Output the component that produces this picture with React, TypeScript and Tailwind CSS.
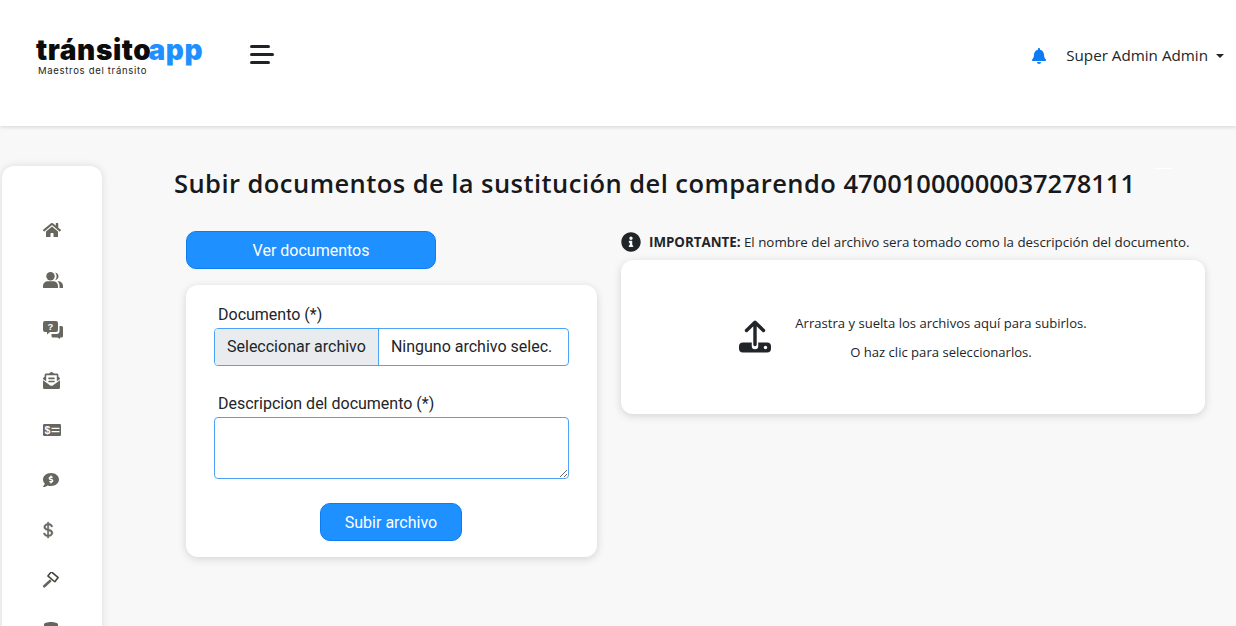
import { FaHome, FaEnvelopeOpenText, FaCommentDollar, FaDatabase, FaBell, FaInfoCircle } from "react-icons/fa";
import { BsCurrencyDollar } from "react-icons/bs";

function Users() {
  return (
    <svg width="20" height="16" viewBox="0 0 20 16" fill="currentColor">
      <circle cx="7.500" cy="4.200" r="4.200" />
      <path d="M0 16v-1.800C0 11 2.400 9.300 4.700 9.300h5.600c2.300 0 4.700 1.700 4.700 4.900V16z" />
      <path d="M12 .4c2 .3 3.500 2 3.500 3.900S14 8 12 8.300c1-1 1.600-2.500 1.600-4S13 1.400 12 .4z" />
      <path d="M14.500 9.300h.8c2.400 0 4.700 1.800 4.700 4.700v2h-3.500v-2c0-1.900-.7-3.500-2-4.700z" />
    </svg>
  );
}

function QuestionComments() {
  return (
    <svg width="20" height="18" viewBox="0 0 20 18" fill="currentColor">
      <path d="M2 0h11a2 2 0 0 1 2 2v7a2 2 0 0 1-2 2H7l-3 2.500V11H2a2 2 0 0 1-2-2V2a2 2 0 0 1 2-2z" />
      <text x="7.500" y="9" textAnchor="middle" fontSize="9.500" fontWeight="700" fill="#fff" fontFamily="Liberation Sans, sans-serif">?</text>
      <path d="M16.500 5h2A1.500 1.500 0 0 1 20 6.500V15a1.500 1.500 0 0 1-1.500 1.500H17V18l-2.500-1.500H10A1.500 1.500 0 0 1 8.500 15v-2H13.500a3 3 0 0 0 3-3z" />
    </svg>
  );
}

function MoneyCheck() {
  return (
    <svg width="18" height="12" viewBox="0 0 18 12" fill="currentColor">
      <rect width="18" height="12" rx="1.200" />
      <text x="4.500" y="9.800" textAnchor="middle" fontSize="10.500" fontWeight="700" fill="#fff" fontFamily="Liberation Sans, sans-serif">$</text>
      <path d="M8.500 4.300h8M8.500 7.700h8" stroke="#fff" strokeWidth="1.200" fill="none" />
    </svg>
  );
}

function Gavel() {
  return (
    <svg width="16" height="16" viewBox="0 0 16 16">
      <rect x="5.500" y="2" width="9" height="5.500" rx=".4" transform="rotate(40 10 4.800)" fill="#fff" stroke="#45453f" strokeWidth="1.600" />
      <path d="M7 9 1.300 14.300" stroke="#66665e" strokeWidth="2.600" strokeLinecap="round" fill="none" />
    </svg>
  );
}

function Hamburger() {
  return (
    <svg width="24" height="20" viewBox="0 0 24 20" fill="#1f2328">
      <rect x="0" y="0" width="20" height="3" rx="1.500" />
      <rect x="0" y="8" width="24" height="3" rx="1.500" />
      <rect x="0" y="16" width="20" height="3" rx="1.500" />
    </svg>
  );
}

function UploadIcon() {
  return (
    <svg width="32" height="33" viewBox="0 0 32 33" fill="#212529">
      <rect x="0" y="22.500" width="32" height="10" rx="4" />
      <circle cx="26.500" cy="27.500" r="1.700" fill="#fff" />
      <path d="M16 26V8" fill="none" stroke="#fff" strokeWidth="6.500" strokeLinecap="round" />
      <path d="M16 24.500V3M7.500 10.500 16 2.200 24.500 10.500" fill="none" stroke="#212529" strokeWidth="3.400" strokeLinecap="round" strokeLinejoin="round" />
    </svg>
  );
}

function Logo() {
  return (
    <div className="flex flex-col w-[170px] mt-[4px]">
      <div className="text-[28px] leading-[28px] font-black tracking-[0.6px] font-['Inter',sans-serif] text-[#0c0c0c] whitespace-nowrap">
        tránsito<span className="text-[#1e90ff] -ml-[3px]">app</span>
      </div>
      <div className="text-[9.500px] leading-[10px] font-normal tracking-[0.7px] ml-[2px] mt-[2px] font-['Inter',sans-serif] text-[#222] whitespace-nowrap">
        Maestros del tránsito
      </div>
    </div>
  );
}

const sideIcons = [
  <FaHome size={18} />,
  <Users />,
  <QuestionComments />,
  <FaEnvelopeOpenText size={17} />,
  <MoneyCheck />,
  <FaCommentDollar size={16} />,
  <BsCurrencyDollar size={18} stroke="currentColor" strokeWidth={0.5} className="-ml-[4px]" />,
  <Gavel />,
  <FaDatabase size={16} />,
];

export default function App() {
  return (
    <div className="relative h-[626px] w-[1236px] overflow-hidden bg-[#f8f8f8] font-['Roboto',sans-serif] text-[#212529]">
      <header className="h-[126px] bg-white shadow-[0_1px_4px_rgba(0,0,0,0.15)] flex items-start relative z-10">
        <div className="ml-[36px] mt-[32px]">
          <Logo />
        </div>
        <div className="ml-[44px] mt-[45px]">
          <Hamburger />
        </div>
        <div className="ml-auto mr-[12px] mt-[45px] flex items-center font-['Open_Sans',sans-serif] text-[15.200px] leading-[21px]">
          <FaBell size={16} className="text-[#0d7bf2]" />
          <span className="ml-[19px]">Super Admin Admin</span>
          <span className="ml-[8px] mt-[1px] w-0 h-0 border-x-[4px] border-x-transparent border-t-[4px] border-t-[#212529]" />
        </div>
      </header>

      <div className="absolute left-[1154px] top-[168px] w-[18px] h-px bg-white" />

      <div className="flex items-start">
        <aside className="ml-[2px] mt-[40px] w-[100px] h-[520px] shrink-0 bg-white rounded-[12px] shadow-[0_0_8px_rgba(0,0,0,0.12)] pt-[39px] text-[#66665e] flex flex-col">
          {sideIcons.map((icon, i) => (
            <div key={i} className="h-[50px] flex items-center pl-[41px] w-full">
              <span className="w-[20px] flex justify-start">{icon}</span>
            </div>
          ))}
        </aside>

        <main className="flex-1 pl-[72px] pt-[39px] pr-[31px]">
          <h1 className="text-[25.500px] leading-[36px] font-semibold font-['Open_Sans',sans-serif] text-[#17191c] whitespace-nowrap">
            <span className="tracking-[0.45px]">Subir documentos de la sustitución del comparendo </span>47001000000037278111
          </h1>

          <div className="flex items-start mt-[30px] ml-[12px] gap-[24px]">
            <div className="w-[411px] shrink-0">
              <button className="block w-[250px] h-[38px] pt-[2px] rounded-[10px] bg-[#1e90ff] border border-[#0d7bf2] text-white text-[16px]">
                Ver documentos
              </button>

              <div className="mt-[16px] bg-white rounded-[12px] shadow-[0_2px_8px_rgba(0,0,0,0.15)] h-[272px] px-[28px] pt-[18px]">
                <label className="block pl-[4px] text-[16px] leading-[23px] mb-[2px]">Documento (*)</label>
                <div className="flex h-[38px] w-[355px] border border-[#4da3f5] rounded-[4px] overflow-hidden text-[16px]">
                  <span className="bg-[#e9ecef] px-[12px] flex items-center border-r border-[#4da3f5] whitespace-nowrap">Seleccionar archivo</span>
                  <span className="px-[12px] flex items-center whitespace-nowrap">Ninguno archivo selec.</span>
                </div>

                <label className="block pl-[4px] mt-[26px] text-[16px] leading-[23px] mb-[2px]">Descripcion del documento (*)</label>
                <textarea className="block w-[355px] h-[62px] border border-[#4da3f5] rounded-[4px] outline-none" />

                <div className="flex justify-center mt-[24px] pr-[1px]">
                  <button className="w-[142px] h-[38px] pt-[2px] rounded-[10px] bg-[#1e90ff] border border-[#0d7bf2] text-white text-[16px]">
                    Subir archivo
                  </button>
                </div>
              </div>
            </div>

            <div className="flex-1 min-w-0">
              <div className="flex items-center h-[20px] mt-[1px] font-['Open_Sans',sans-serif] text-[13.340px] whitespace-nowrap text-[#212529]">
                <FaInfoCircle size={20} className="text-[#212529] shrink-0" />
                <span className="ml-[8px]"><b className="font-bold">IMPORTANTE:</b> El nombre del archivo sera tomado como la descripción del documento.</span>
              </div>
              <div className="mt-[8px] h-[154px] bg-white rounded-[12px] shadow-[0_2px_8px_rgba(0,0,0,0.15)] flex items-center">
                <div className="ml-[118px] mt-[-2px] shrink-0"><UploadIcon /></div>
                <div className="w-[300px] ml-[20px] text-center font-['Open_Sans',sans-serif] text-[13.080px] leading-[19px] mt-[1px]">
                  <p>Arrastra y suelta los archivos aquí para subirlos.</p>
                  <p className="mt-[10px]">O haz clic para seleccionarlos.</p>
                </div>
              </div>
            </div>
          </div>
        </main>
      </div>
    </div>
  );
}
